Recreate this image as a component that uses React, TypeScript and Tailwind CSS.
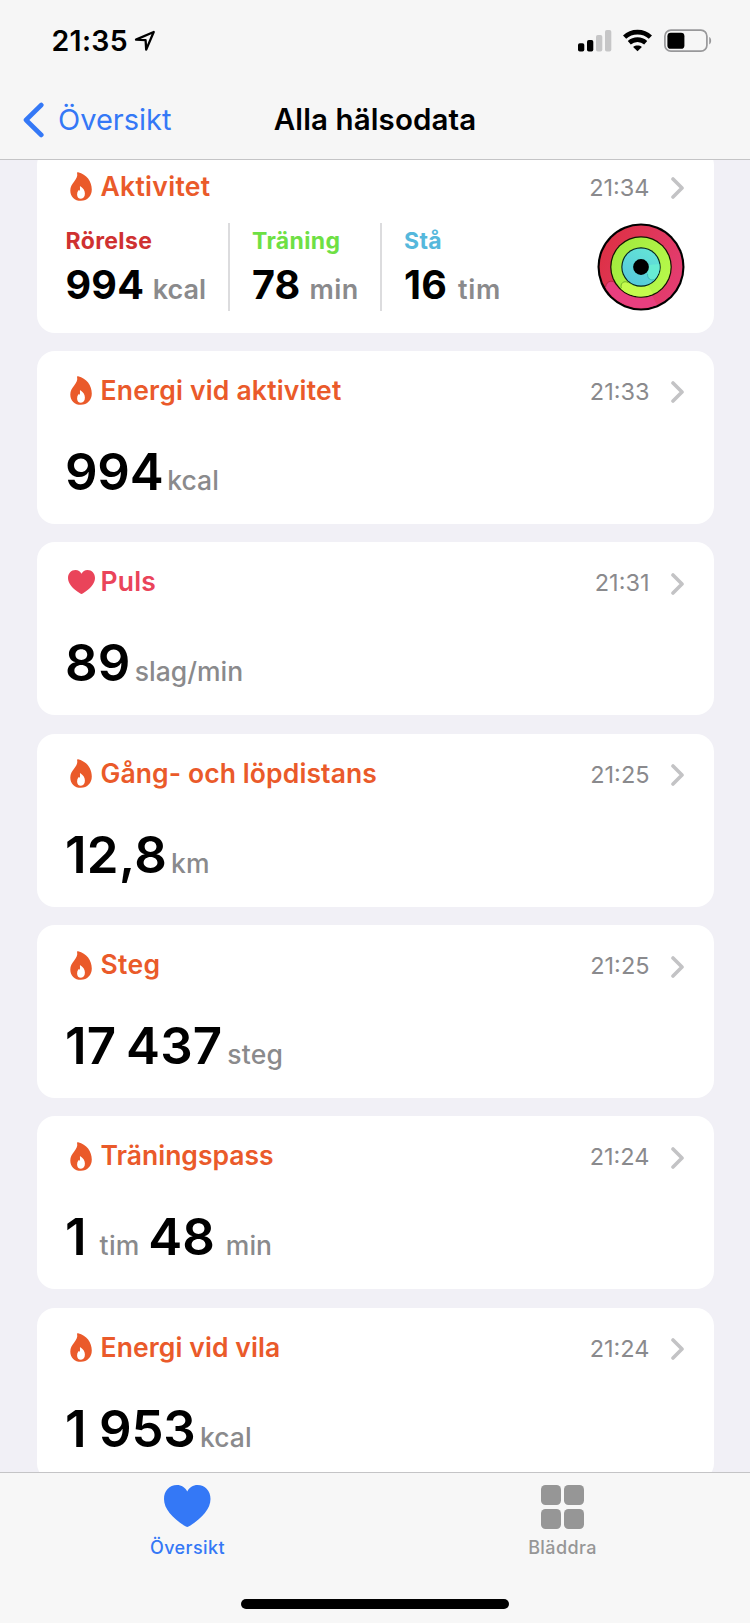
import type { ReactNode } from "react";

function Flame() {
  return (
    <svg className="block h-[29px] w-[22px]" viewBox="0 0 22 29" fill="none">
      <path
        fillRule="evenodd"
        clipRule="evenodd"
        fill="#ea5a2a"
        d="M8.1.2C7.3 0 6.9.6 7.1 1.3C7.8 4 6.5 6.6 4.2 9.4C1.8 12.3.3 14.9.3 18.4C.3 24.5 4.6 28.8 10.9 28.8C17.3 28.8 21.8 24.2 21.8 17.6C21.8 9.2 16.6 2.4 8.1.2ZM9.9 14.8C9.8 14.4 10.3 14.1 10.7 14.4C13.3 16 14.9 18.7 14.9 21.6C14.9 24.9 13.4 26.8 11 26.8C8.6 26.8 7.1 25 7.1 22.4C7.1 21 7.5 19.7 8.3 18.5C8.6 18.1 9 18.1 9.3 18.4L9.7 18.8C10.1 17.5 10.2 16.2 9.9 14.8Z"
      />
    </svg>
  );
}

function Heart({ className }: { className: string }) {
  return (
    <svg className={className} viewBox="0 0 46 42" preserveAspectRatio="none" fill="currentColor">
      <path d="M23 42C22.2 42 21.3 41.5 20.3 40.8C8 32.6 0 23.6 0 13.9C0 5.8 5.4 0 12.8 0C17.3 0 21 2.5 23 6.5C25 2.5 28.7 0 33.2 0C40.6 0 46 5.8 46 13.9C46 23.6 38 32.6 25.7 40.8C24.7 41.5 23.8 42 23 42Z" />
    </svg>
  );
}

function Chevron() {
  return (
    <svg className="block h-[22px] w-[14px]" viewBox="0 0 14 22" fill="none">
      <path d="M2 2L11 11L2 20" stroke="#c3c3c5" strokeWidth="3.6" strokeLinecap="round" strokeLinejoin="round" />
    </svg>
  );
}

function Rings() {
  return (
    <svg className="block h-[88px] w-[88px]" viewBox="0 0 88 88">
      <defs>
        <linearGradient id="move" x1="0" y1="0" x2="1" y2="0.5">
          <stop offset="0" stopColor="#dc2f3f" />
          <stop offset="1" stopColor="#e33c6f" />
        </linearGradient>
        <linearGradient id="exercise" x1="0" y1="0" x2="1" y2="0.6">
          <stop offset="0" stopColor="#9fe83c" />
          <stop offset="1" stopColor="#b6f84a" />
        </linearGradient>
        <linearGradient id="stand" x1="0.2" y1="1" x2="0.8" y2="0">
          <stop offset="0" stopColor="#55c8dc" />
          <stop offset="1" stopColor="#64e5d6" />
        </linearGradient>
      </defs>
      <circle cx="44" cy="44" r="43.5" fill="#000" />
      <circle cx="44" cy="44" r="41.4" fill="url(#move)" />
      <path d="M8.6 64.4A41.4 41.4 0 0 0 60 82L55 72A30.4 30.4 0 0 1 18.6 62C17.8 57.3 9.3 57.7 8.6 64.4Z" fill="#e83f7f" />
      <path d="M8.6 64C9.3 57.3 16.8 56.5 18.6 61" fill="none" stroke="#9d2037" strokeWidth="1" strokeOpacity="0.6" />
      <circle cx="44" cy="44" r="30.8" fill="#101500" />
      <circle cx="44" cy="44" r="29.6" fill="url(#exercise)" />
      <path d="M24.4 66.2A29.6 29.6 0 0 0 56 71L51 62A19.5 19.5 0 0 1 31.3 60C28 56.8 22.8 60.5 24.4 66.2Z" fill="#c5fb4d" />
      <path d="M24.4 65C22.8 60.5 27 57 31.3 59.7" fill="none" stroke="#5d9a20" strokeWidth="1" strokeOpacity="0.7" />
      <circle cx="44" cy="44" r="19.7" fill="#04221f" />
      <circle cx="44" cy="44" r="18.6" fill="url(#stand)" />
      <path d="M62.4 41A18.6 18.6 0 0 1 57 57C53 57.6 50.3 55 50.6 50.8L52 42Z" fill="#67ecd3" />
      <path d="M57.5 56.4C53.5 58 50.2 55.5 50.6 50.8" fill="none" stroke="#2aa3a5" strokeWidth="0.9" strokeOpacity="0.7" />
      <circle cx="44" cy="44" r="7.9" fill="#000" />
    </svg>
  );
}

type Part = { text: string; unit?: boolean; cls: string };
type Metric = { title: string; titleCls: string; time: string; heart?: boolean; parts: Part[] };

const metrics: Metric[] = [
  {
    title: "Energi vid aktivitet",
    titleCls: "tracking-[0.2px]",
    time: "21:33",
    parts: [
      { text: "994", cls: "tracking-[-0.3px]" },
      { text: "kcal", unit: true, cls: "ml-[4px]" },
    ],
  },
  {
    title: "Puls",
    titleCls: "tracking-[0.2px]",
    time: "21:31",
    heart: true,
    parts: [
      { text: "89", cls: "tracking-[0px]" },
      { text: "slag/min", unit: true, cls: "ml-[4.5px]" },
    ],
  },
  {
    title: "Gång- och löpdistans",
    titleCls: "tracking-[0.1px]",
    time: "21:25",
    parts: [
      { text: "12,8", cls: "tracking-[0.3px]" },
      { text: "km", unit: true, cls: "ml-[4px]" },
    ],
  },
  {
    title: "Steg",
    titleCls: "tracking-[0.3px]",
    time: "21:25",
    parts: [
      { text: "17 437", cls: "tracking-[0.1px] [word-spacing:-3px]" },
      { text: "steg", unit: true, cls: "ml-[5px] tracking-[0.2px]" },
    ],
  },
  {
    title: "Träningspass",
    titleCls: "tracking-[0px]",
    time: "21:24",
    parts: [
      { text: "1", cls: "tracking-[0px]" },
      { text: "tim", unit: true, cls: "ml-[13px] tracking-[0.3px]" },
      { text: "48", cls: "ml-[8.5px]" },
      { text: "min", unit: true, cls: "ml-[11px]" },
    ],
  },
  {
    title: "Energi vid vila",
    titleCls: "tracking-[0.1px]",
    time: "21:24",
    parts: [
      { text: "1 953", cls: "tracking-[-0.2px]" },
      { text: "kcal", unit: true, cls: "ml-[4.5px]" },
    ],
  },
];

function CardHeader({ title, titleCls, time, heart }: { title: string; titleCls: string; time: string; heart?: boolean }) {
  return (
    <div className={`flex h-[32px] items-center whitespace-nowrap ${heart ? "text-[#ea445a]" : "text-[#ea5a2a]"}`}>
      <div className="flex w-[30px] justify-center">{heart ? <Heart className="block h-[24px] w-[27px]" /> : <Flame />}</div>
      <h2 className={`-mt-[2px] ml-[4.5px] text-[26.5px] leading-[32px] font-semibold ${titleCls}`}>{title}</h2>
      <time className="mt-[2px] ml-auto text-[23.5px] leading-[32px] text-[#8a8a8d]">{time}</time>
      <div className="mt-[3px] ml-[21px]">
        <Chevron />
      </div>
    </div>
  );
}

function MetricCard({ metric }: { metric: Metric }) {
  return (
    <section className="h-[173px] shrink-0 rounded-[18px] bg-white pt-[24px] pr-[29px] pl-[29.5px]">
      <CardHeader title={metric.title} titleCls={metric.titleCls} time={metric.time} heart={metric.heart} />
      <div className="mt-[35px] -ml-[1px] flex items-baseline whitespace-nowrap">
        {metric.parts.map((p) => (
          <span
            key={p.text}
            className={`${p.unit ? "text-[26.5px] font-medium text-[#8a8a8c]" : "text-[51px] font-semibold text-black"} leading-[60px] ${p.cls}`}
          >
            {p.text}
          </span>
        ))}
      </div>
    </section>
  );
}

type StatProps = { label: string; value: string; unit: string; color: string; cls: string; unitCls: string };

function Stat({ label, value, unit, color, cls, unitCls }: StatProps) {
  return (
    <div className={`h-[88px] shrink-0 whitespace-nowrap ${cls}`}>
      <div className={`mt-[3px] text-[23px] leading-[30px] font-bold tracking-[0.35px] ${color}`}>{label}</div>
      <div className="mt-[1px] flex items-baseline">
        <span className="text-[39.5px] leading-[56px] font-bold tracking-[0.2px]">{value}</span>
        <span className={`text-[27px] font-semibold text-[#8a8a8c] ${unitCls}`}>{unit}</span>
      </div>
    </div>
  );
}

function ActivityCard() {
  return (
    <section className="-mt-[13.5px] h-[186px] shrink-0 rounded-[18px] bg-white pt-[24px] pr-[29px] pl-[29.5px]">
      <CardHeader title="Aktivitet" titleCls="tracking-[0.3px]" time="21:34" />
      <div className="mt-[20.5px] flex">
        <Stat
          label="Rörelse"
          value="994"
          unit="kcal"
          color="text-[#cf3131]"
          cls="-ml-[0.5px] w-[164px] border-r-2 border-[#dcdcde]"
          unitCls="ml-[8.5px]"
        />
        <Stat
          label="Träning"
          value="78"
          unit="min"
          color="text-[#6ee044]"
          cls="w-[152px] border-r-2 border-[#dcdcde] pl-[22.5px]"
          unitCls="ml-[9px] tracking-[0.4px]"
        />
        <Stat
          label="Stå"
          value="16"
          unit="tim"
          color="text-[#55b8dc]"
          cls="pl-[22.5px]"
          unitCls="ml-[11px] tracking-[0.6px]"
        />
        <div className="ml-auto">
          <Rings />
        </div>
      </div>
    </section>
  );
}

function StatusBar() {
  return (
    <div className="flex h-[80px] pr-[38px] pl-[51.5px]">
      <span className="mt-[24px] text-[28.5px] leading-[34px] font-semibold tracking-[0.3px]">21:35</span>
      <svg className="mt-[30px] ml-[6.5px] h-[22px] w-[22px]" viewBox="0 0 22 22" fill="none">
        <path d="M2 9.6L19.7 2L12.2 19.6L11.6 10.2Z" stroke="#000" strokeWidth="2.3" strokeLinejoin="round" />
      </svg>
      <svg className="mt-[28px] ml-auto h-[24px] w-[34px]" viewBox="0 0 34 24">
        <rect x="0" y="15.3" width="6.3" height="8.2" rx="1.8" fill="#000" />
        <rect x="9" y="12" width="6.3" height="11.5" rx="1.8" fill="#000" />
        <rect x="18" y="7" width="6.3" height="16.5" rx="1.8" fill="#c6c6c7" />
        <rect x="27" y="2" width="6.3" height="21.5" rx="1.8" fill="#c6c6c7" />
      </svg>
      <svg className="mt-[28px] ml-[11px] h-[24px] w-[29px]" viewBox="0 0 29 24" fill="none" stroke="#000" strokeWidth="4.6">
        <path d="M1.6 9.1C8.6 2.4 20.4 2.4 27.4 9.1" />
        <path d="M6.3 14.7C11 10.6 18 10.6 22.7 14.7" />
        <path d="M14.5 23.3L10.1 18.9C12.6 17 16.4 17 18.9 18.9Z" fill="#000" stroke="none" />
      </svg>
      <svg className="mt-[28px] ml-[12px] h-[25px] w-[48px]" viewBox="0 0 48 25">
        <rect x="0.9" y="2.2" width="42" height="21" rx="6" fill="none" stroke="#98989a" strokeWidth="1.7" />
        <rect x="3.4" y="4.8" width="17" height="16" rx="3.4" fill="#000" />
        <path d="M45.2 9C47.8 10 47.8 15.4 45.2 16.4Z" fill="#98989a" />
      </svg>
    </div>
  );
}

function Tab({ label, cls, children }: { label: string; cls: string; children: ReactNode }) {
  return (
    <div className={`flex flex-1 flex-col items-center ${cls}`}>
      <div className="mt-[12px] flex h-[44px] items-start">{children}</div>
      <span className="mt-[8px] text-[18px] leading-[22px] font-medium tracking-[0.4px]">{label}</span>
    </div>
  );
}

export default function App() {
  return (
    <div className="flex h-[1623px] w-[750px] flex-col overflow-hidden bg-[#f1f0f6] font-['Inter','Liberation_Sans',sans-serif] text-black">
      <header className="z-10 h-[160px] shrink-0 border-b border-[#c4c4c6] bg-[#f6f6f6]">
        <StatusBar />
        <div className="grid h-[79px] grid-cols-[1fr_auto_1fr] items-center">
          <div className="flex items-center pl-[23px] text-[#3478f6]">
            <svg className="h-[36px] w-[21px]" viewBox="0 0 21 36" fill="none">
              <path d="M18.3 3L3 18L18.3 33" stroke="currentColor" strokeWidth="4.6" strokeLinecap="round" strokeLinejoin="round" />
            </svg>
            <span className="ml-[14px] text-[29px] leading-[36px]">Översikt</span>
          </div>
          <h1 className="-mt-[2px] text-[29.5px] leading-[36px] font-semibold tracking-[0.1px]">Alla hälsodata</h1>
        </div>
      </header>

      <main className="flex min-h-0 flex-1 flex-col gap-[18.4px] overflow-hidden pr-[36.5px] pl-[36.5px]">
        <ActivityCard />
        {metrics.map((m) => (
          <MetricCard key={m.title} metric={m} />
        ))}
      </main>

      <footer className="z-10 h-[151px] shrink-0 border-t border-[#c4c4c6] bg-[#f7f7f7]">
        <div className="flex h-[126px]">
          <Tab label="Översikt" cls="text-[#3478f6]">
            <Heart className="block h-[42px] w-[46.5px]" />
          </Tab>
          <Tab label="Bläddra" cls="text-[#969696]">
            <div className="grid grid-cols-2 gap-[3.6px]">
              <i className="h-[20px] w-[20px] rounded-[4.5px] bg-[#969696]" />
              <i className="h-[20px] w-[20px] rounded-[4.5px] bg-[#969696]" />
              <i className="h-[20px] w-[20px] rounded-[4.5px] bg-[#969696]" />
              <i className="h-[20px] w-[20px] rounded-[4.5px] bg-[#969696]" />
            </div>
          </Tab>
        </div>
        <div className="mx-auto h-[9.5px] w-[268px] rounded-full bg-black" />
      </footer>
    </div>
  );
}
